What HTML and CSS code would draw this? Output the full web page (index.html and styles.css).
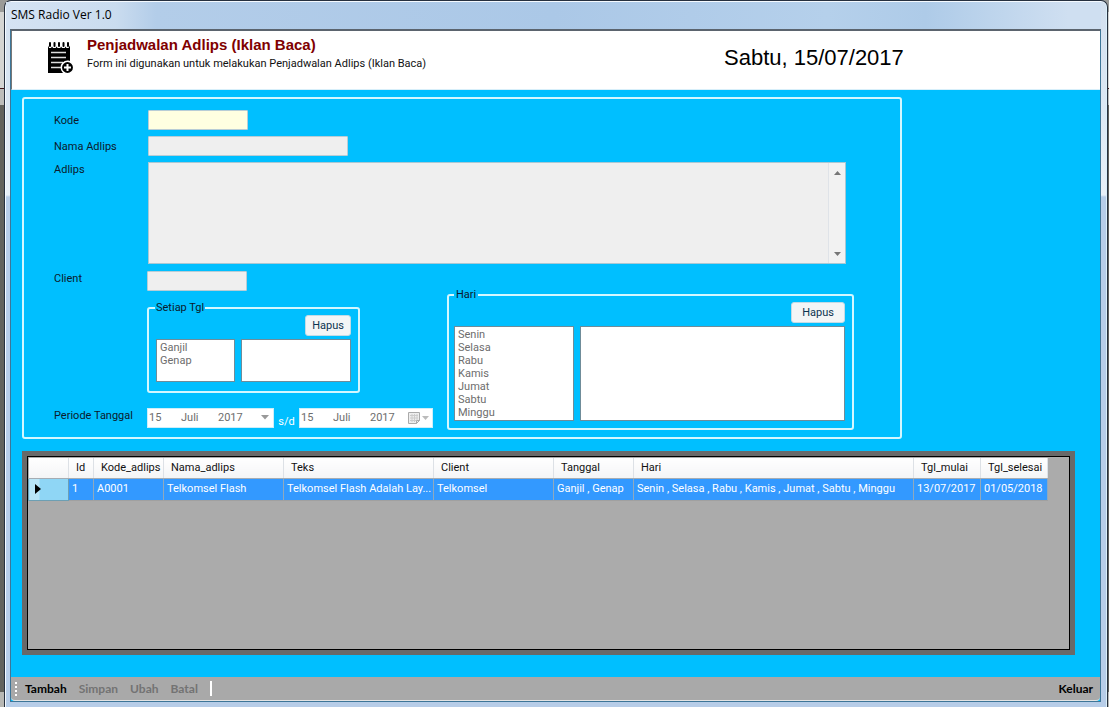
FILE: index.html
```html
<!DOCTYPE html>
<html lang="id">
<head>
<meta charset="utf-8">
<title>SMS Radio Ver 1.0</title>
<link rel="stylesheet" href="styles.css">
</head>
<body>
<div class="window">
  <header class="titlebar">SMS Radio Ver 1.0</header>
  <main class="client">
    <div class="banner">
      <svg class="banner-icon" viewBox="0 0 28 34" aria-hidden="true">
        <path d="M1 6h22v14a7 7 0 0 0-6 12H1z"/>
        <path d="M1 4h22v3H1z" fill="#fff"/>
        <path d="M3 2v3M7.500 2v3M12 2v3M16.500 2v3M21 2v3" stroke="#000" stroke-width="2" stroke-linecap="round"/>
        <path d="M1 4.500q1 3 2 3t2-2q1 2 2.500 2t2-2q1 2 2.500 2t2-2q1 2 2.500 2t2-2q1 2 2 2t2.500-3V10H1z"/>
        <path d="M4 11.500h15M4 16.500h15M4 21.500h12M4 26.500h10" stroke="#ddd" stroke-width="1.500"/>
        <circle cx="20.500" cy="26.500" r="6.200" stroke="#fff" stroke-width="1.500"/>
        <path d="M20.500 23v7M17 26.500h7" stroke="#fff" stroke-width="2"/>
      </svg>
      <div class="banner-text">
        <h1>Penjadwalan Adlips (Iklan Baca)</h1>
        <p>Form ini digunakan untuk melakukan Penjadwalan Adlips (Iklan Baca)</p>
      </div>
      <div class="banner-date">Sabtu, 15/07/2017</div>
    </div>

    <form class="content">
      <div class="frame form-frame">
        <div class="fields">
          <label for="kode">Kode</label>
          <input class="box short kode" id="kode" type="text">
          <label for="nama">Nama Adlips</label>
          <input class="box medium" id="nama" type="text" disabled>
          <label for="adlips">Adlips</label>
          <div class="memo">
            <textarea id="adlips" disabled></textarea>
            <div class="memo-scroll" aria-hidden="true">
              <svg viewBox="0 0 9 5"><path d="M0 5L4.500 0L9 5z"/></svg>
              <svg viewBox="0 0 9 5"><path d="M0 0L4.500 5L9 0z"/></svg>
            </div>
          </div>
        </div>
        <div class="lower">
          <label for="client">Client</label>
          <input class="box short" id="client" type="text" disabled>
          <fieldset class="frame setiap">
            <legend>Setiap Tgl</legend>
            <button class="btn" type="button">Hapus</button>
            <div class="lists">
              <select multiple disabled aria-label="Pilihan tanggal"><option>Ganjil</option><option>Genap</option></select>
              <select multiple disabled aria-label="Tanggal terpilih"></select>
            </div>
          </fieldset>
          <label for="mulai">Periode Tanggal</label>
          <div class="period">
            <div class="date first">
              <input class="day" id="mulai" value="15" disabled>
              <input class="month" value="Juli" aria-label="Bulan mulai" disabled>
              <input class="year" value="2017" aria-label="Tahun mulai" disabled>
              <button class="drop" type="button" aria-label="Buka kalender mulai" disabled>
                <svg width="8" height="5" viewBox="0 0 8 5"><path d="M0 0h8L4 4.500z" fill="#999"/></svg>
              </button>
            </div>
            <span class="until">s/d</span>
            <div class="date second">
              <input class="day" value="15" aria-label="Hari selesai" disabled>
              <input class="month" value="Juli" aria-label="Bulan selesai" disabled>
              <input class="year" value="2017" aria-label="Tahun selesai" disabled>
              <button class="drop" type="button" aria-label="Buka kalender selesai" disabled>
                <svg width="21" height="12" viewBox="0 0 21 12"><path d="M.5.5h11v8l-3 3h-8z" fill="#eee" stroke="#aaa"/><path d="M2 3.500h8M2 6h8M2 8.500h6M4 2v8M6.500 2v8M9 2v6" stroke="#ccc"/><path d="M11.500 8.500h-3v3" fill="none" stroke="#aaa"/><path d="M14 4h7l-3.500 4z" fill="#bbb"/></svg>
              </button>
            </div>
          </div>
          <fieldset class="frame hari">
            <legend>Hari</legend>
            <button class="btn wide" type="button">Hapus</button>
            <div class="lists">
              <select multiple disabled aria-label="Pilihan hari"><option>Senin</option><option>Selasa</option><option>Rabu</option><option>Kamis</option><option>Jumat</option><option>Sabtu</option><option>Minggu</option></select>
              <select multiple disabled aria-label="Hari terpilih"></select>
            </div>
          </fieldset>
        </div>
      </div>

      <div class="grid">
        <table>
          <colgroup><col class="w40"><col class="w25"><col class="w70"><col class="w120"><col class="w150"><col class="w120"><col class="w80"><col class="w280"><col class="w67"><col class="w67"></colgroup>
          <thead>
            <tr><th></th><th>Id</th><th>Kode_adlips</th><th>Nama_adlips</th><th>Teks</th><th>Client</th><th>Tanggal</th><th>Hari</th><th>Tgl_mulai</th><th>Tgl_selesai</th></tr>
          </thead>
          <tbody>
            <tr><td class="marker"><svg width="6" height="10" viewBox="0 0 6 10"><path d="M0 0L6 5L0 10z"/></svg></td><td>1</td><td>A0001</td><td>Telkomsel Flash</td><td>Telkomsel Flash Adalah Lay...</td><td>Telkomsel</td><td>Ganjil , Genap</td><td>Senin , Selasa , Rabu , Kamis , Jumat , Sabtu , Minggu</td><td>13/07/2017</td><td>01/05/2018</td></tr>
          </tbody>
        </table>
      </div>
    </form>

    <nav class="toolbar">
      <span class="grip"></span>
      <button type="button">Tambah</button>
      <button type="button" disabled>Simpan</button>
      <button type="button" disabled>Ubah</button>
      <button type="button" disabled>Batal</button>
      <span class="divider"></span>
      <button class="exit" type="button">Keluar</button>
    </nav>
  </main>
</div>
</body>
</html>
```

FILE: styles.css
```css
* { box-sizing: border-box; }

body {
  margin: 0;
  min-height: 100vh;
  display: flex;
  padding: 0 1px 0 4px;
  background: linear-gradient(#9b9b98 0 12px, #d5d5d2 12px 88px, #40161a 88px 89px, #bdbdba 89px 105px, #62625c 105px 692px, #b8b8b4 692px);
  font: 11px/14px Roboto, "Liberation Sans", Arial, sans-serif;
  color: #0b1a2c;
}

input, select, textarea, button { font: inherit; }

.window {
  flex: 1;
  display: flex;
  flex-direction: column;
  border: 1px solid #26303f;
  border-bottom: 0;
  border-radius: 7px 7px 0 0;
  padding: 0 6px 5px 5px;
  background: linear-gradient(#d3e0ef 0, #dbe7f3 100px, #e8f0f8 194px, #b7cde8 196px);
  box-shadow: inset 1px 1px 0 #f5faff, inset -1px 0 0 #dcf0fa;
}

.titlebar {
  height: 27px;
  margin: 1px 0 0 -4px;
  padding: 5px 0 0 5px;
  background: linear-gradient(90deg, #d5e3f3, #cadcef 110px, #b3cde9 150px, #abc8e7 50%, #b5d0eb 75%, #aecbe8 84%, #cfdff1 97%);
  font: 12px/16px "Open Sans", sans-serif;
  color: #000;
}

.client {
  flex: 1;
  display: flex;
  flex-direction: column;
  border: 1px solid #3d7698;
  border-top: 2px solid #5b646e;
  background: #00bfff;
}

.banner {
  display: flex;
  height: 59px;
  padding-left: 35px;
  background: #fff;
  border-left: 1px solid #777;
  border-bottom: 1px solid #d7effa;
  color: #111;
}

.banner-icon { width: 28px; height: 34px; margin-top: 10px; }
.banner-text { width: 649px; padding: 6px 0 0 12px; }
.banner-text h1 { margin: 0; font: bold 15px/16px "Liberation Sans", Arial, sans-serif; color: #800000; }
.banner-text p { margin: 4px 0 0; }
.banner-date { padding-top: 14px; font: 22px/26px "Liberation Sans", Arial, sans-serif; color: #000; white-space: nowrap; }

.content {
  flex: 1;
  display: flex;
  flex-direction: column;
  padding: 7px 25px 22px 11px;
}

.frame { border: 2px solid #d4f7ff; border-radius: 3px; margin: 0; min-width: 0; }

.form-frame { margin: 0 173px 12px 0; padding: 11px 46px 7px 30px; }

.fields { display: grid; grid-template-columns: 94px 1fr; row-gap: 6px; margin-right: 8px; }
.fields label { padding-top: 4px; }
.fields label[for="adlips"] { padding-top: 1px; }

.box {
  height: 20px;
  padding: 0 3px;
  border: 1px solid #b8cdd6;
  border-radius: 1px;
  background: #efefef;
}
.short { width: 100px; }
.medium { width: 200px; }
.kode { background: #ffffe1; }

.memo { display: flex; height: 102px; border: 1px solid #a9c8d4; background: #efefef; }
.memo textarea { flex: 1; border: 0; background: transparent; resize: none; }
.memo-scroll {
  width: 17px;
  display: flex;
  flex-direction: column;
  justify-content: space-between;
  align-items: center;
  padding: 8px 0 7px;
  border-left: 1px solid #dfe3e8;
  background: #f2f2f2;
}
.memo-scroll svg { width: 7px; height: 4px; fill: #777; }

.lower { display: grid; grid-template-columns: 93px 300px 1fr; margin-top: 7px; }
.lower label { padding-top: 1px; }
.setiap { grid-column: 2; width: 213px; margin: 9px 0 15px; padding: 0 7px 7px; }
.hari { grid-column: 3; grid-row: 1 / 4; margin-top: 17px; padding: 0 7px 7px 5px; }

legend { padding: 0 2px; height: 14px; }
.setiap legend { padding: 0 1px; margin-left: -1px; }

.btn {
  display: block;
  width: 46px;
  height: 21px;
  margin: 0 0 3px auto;
  padding: 0;
  border: 1px solid #c3dbe5;
  border-radius: 3px;
  background: #f3f5f6;
  color: #0c3350;
}
.wide { width: 54px; }

.lists { display: grid; gap: 6px; }
.setiap .lists { grid-template-columns: 79px 1fr; height: 43px; }
.hari .lists { grid-template-columns: 120px 1fr; height: 95px; }
.lists select {
  width: 100%;
  height: 100%;
  padding: 1px 0;
  overflow: hidden;
  border: 1px solid #6f8c99;
  border-radius: 0;
  background: #fff;
  opacity: 1;
}
.lists option { min-height: 13px; padding: 0 3px; line-height: 13px; color: #6d6d6d; }

.period { display: flex; }
.date { display: flex; align-items: center; height: 20px; padding-left: 1px; background: #fff; border: 1px solid #cdeefa; }
.first { width: 127px; }
.second { width: 134px; }
.date input { padding: 0; border: 0; background: transparent; color: #6d6d6d; }
.date .day { width: 32px; }
.date .month { width: 37px; }
.date .year { width: 34px; }
.drop { flex: 1; display: flex; justify-content: flex-end; padding: 0 4px; border: 0; background: transparent; }
.until { width: 25px; padding-top: 7px; text-align: center; color: #fff; }

.grid { flex: 1; border: 5px solid #696969; outline: 1px solid #000; outline-offset: -6px; padding: 2px 1px 1px; background: #ababab; }

table { border-collapse: collapse; table-layout: fixed; width: 1020px; }
.w25 { width: 25px; }
.w40 { width: 40px; }
.w67 { width: 67px; }
.w70 { width: 70px; }
.w80 { width: 80px; }
.w120 { width: 120px; }
.w150 { width: 150px; }
.w280 { width: 280px; }
th, td { overflow: hidden; white-space: nowrap; text-align: left; }
th { height: 20px; padding: 0 0 0 7px; border-right: 1px solid #dde1e6; border-bottom: 1px solid #a5acb3; background: linear-gradient(#fff, #f4f5f6); font-weight: normal; color: #111; }
td { height: 22px; padding: 0 0 0 3px; border-right: 1px solid #8fa9bd; border-bottom: 1px solid #a0a0a0; background: #3399ff; color: #fff; }
.marker { padding: 0 0 0 6px; background: linear-gradient(90deg, #b9e5f7 0 10px, #8fd6f5 10px); border: 1px solid #6d9fb3; }
.marker svg { display: block; }

.toolbar {
  display: flex;
  align-items: center;
  height: 24px;
  padding: 0 7px 0 4px;
  border-bottom: 1px solid #e4e4e4;
  border-radius: 0 0 4px 4px;
  background: #a9a9a9;
}
.toolbar button { margin: 0 12px 0 0; padding: 0; border: 0; background: transparent; font: bold 12px/16px Lato, "Open Sans", sans-serif; color: #000; }
.toolbar button:disabled { color: #737373; }
.grip { width: 2px; height: 14px; margin-right: 8px; background: repeating-linear-gradient(#fff 0 2px, transparent 2px 4px); }
.divider { width: 2px; height: 15px; background: #fff; }
.toolbar .exit { margin: 0 0 0 auto; }
```
